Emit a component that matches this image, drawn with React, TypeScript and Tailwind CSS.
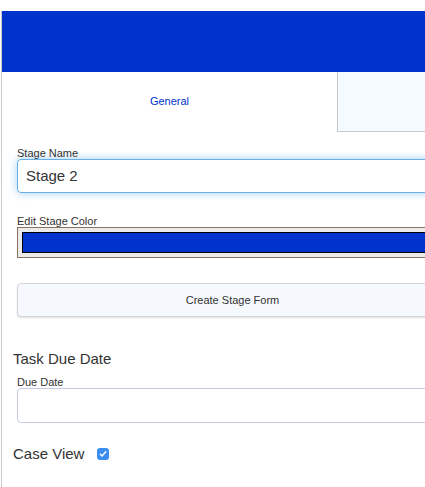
import React from "react";

export default function App() {
  return (
    <div className="w-[425px] h-[487px] overflow-hidden bg-white pt-[11px] pl-[1px] font-['Liberation_Sans',Arial,sans-serif]">
      <div className="w-[470px] h-[476px] border-l border-[#cccccc]">
        {/* header */}
        <div className="h-[61px] bg-[#0033cc]" />

        {/* tabs */}
        <div className="flex h-[60px]">
          <div className="w-[335px] flex items-center justify-center pb-[2px] text-[11px] text-[#0033cc]">
            General
          </div>
          <div className="flex-1 bg-[#f5faff] border-l border-b border-[#c8c8c8]" />
        </div>

        {/* form */}
        <div className="pl-[15px] pt-[15px] w-[446px]">
          <label className="block text-[11px] leading-[13px] text-[#333]">Stage Name</label>
          <div className="mt-[-1px] h-[34px] rounded-[4px] border border-[#66afe9] shadow-[0_0_8px_rgba(102,175,233,0.6)] flex items-center pl-[8px] text-[15px] text-[#333]">
            Stage 2
          </div>

          <label className="block mt-[22px] text-[11px] leading-[13px] text-[#333]">Edit Stage Color</label>
          <div className="mt-[-1px] h-[31px] border border-[#8b7360] bg-[#ebebeb] p-[4px]">
            <div className="h-full border border-black bg-[#0033cc]" />
          </div>

          <button className="mt-[25px] w-full h-[34px] rounded-[4px] border border-[#d4d4d4] bg-[#f5f9fd] shadow-[0_1px_2px_rgba(0,0,0,0.12)] text-[11px] text-[#333]">
            Create Stage Form
          </button>

          <div className="mt-[33px] -ml-[4px] text-[15px] leading-[18px] text-[#333]">Task Due Date</div>
          <label className="block mt-[8px] text-[11px] leading-[13px] text-[#333]">Due Date</label>
          <div className="mt-[-1px] h-[35px] rounded-[4px] border border-[#c5cbe6]" />

          <div className="mt-[22px] -ml-[4px] flex items-center">
            <span className="text-[15px] leading-[18px] text-[#333]">Case View</span>
            <span className="ml-[13px] w-[12px] h-[12px] rounded-[3px] bg-[#3b8ef0] flex items-center justify-center">
              <svg width="8" height="8" viewBox="0 0 8 8">
                <path d="M1.3 4.2 L3.1 6 L6.7 1.8" fill="none" stroke="white" strokeWidth="1.4" strokeLinecap="round" strokeLinejoin="round" />
              </svg>
            </span>
          </div>
        </div>
      </div>
    </div>
  );
}
